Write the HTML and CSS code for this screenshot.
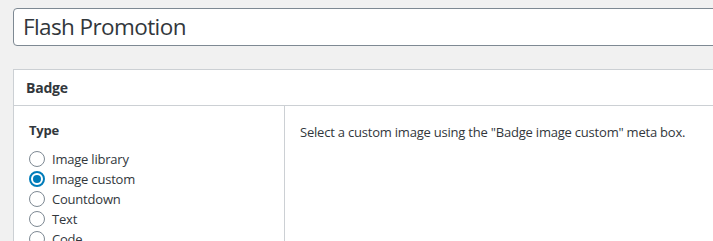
FILE: index.html
```html
<!DOCTYPE html>
<html>
<head>
<meta charset="utf-8">
<link rel="stylesheet" href="styles.css">
</head>
<body>
<div class="wrap">
  <div class="title-field">Flash Promotion</div>
  <div class="postbox">
    <h2 class="postbox-header">Badge</h2>
    <div class="postbox-body">
      <div class="col-left">
        <div class="field-label">Type</div>
        <ul class="radio-list">
          <li class="radio-item"><span class="radio"></span><span class="radio-label">Image library</span></li>
          <li class="radio-item"><span class="radio checked"></span><span class="radio-label">Image custom</span></li>
          <li class="radio-item"><span class="radio"></span><span class="radio-label">Countdown</span></li>
          <li class="radio-item"><span class="radio"></span><span class="radio-label">Text</span></li>
          <li class="radio-item"><span class="radio"></span><span class="radio-label">Code</span></li>
        </ul>
      </div>
      <div class="col-right">
        <p class="note">Select a custom image using the "Badge image custom" meta box.</p>
      </div>
    </div>
  </div>
</div>
</body>
</html>
```
FILE: styles.css
```css
html, body {
  margin: 0;
  padding: 0;
}
body {
  background: #f1f1f1;
  color: #32373c;
  font-family: "Open Sans", "Noto Sans", sans-serif;
  font-size: 13px;
  line-height: 1.4;
  letter-spacing: -0.21px;
  overflow: hidden;
  height: 241px;
}
.wrap {
  padding: 8px 0 0 13px;
  width: 760px;
}
.title-field {
  box-sizing: border-box;
  height: 38px;
  border: 1px solid #7e8993;
  border-radius: 4px;
  background: #fff;
  padding: 0 9px;
  font-size: 22.5px;
  letter-spacing: -0.6px;
  line-height: 35px;
  color: #32373c;
}
.postbox {
  margin-top: 23px;
  background: #fff;
  border: 1px solid #ccd0d4;
}
.postbox-header {
  margin: 0;
  padding: 8px 12px;
  font-size: 14px;
  line-height: 19px;
  font-weight: 700;
  border-bottom: 1px solid #ccd0d4;
}
.postbox-body {
  display: flex;
  min-height: 200px;
}
.col-left {
  border-right: 1px solid #ccd0d4;
  padding: 15px 0 0 15px;
  box-sizing: border-box;
  flex: none;
  width: 271px;
}
.field-label {
  font-weight: 700;
  font-size: 13px;
  line-height: 19px;
}
.radio-list {
  list-style: none;
  margin: 9px 0 0;
  padding: 0;
}
.radio-item {
  display: flex;
  align-items: center;
  height: 20px;
}
.radio {
  box-sizing: border-box;
  width: 16px;
  height: 16px;
  border: 1px solid #7e8993;
  border-radius: 50%;
  background: #fff;
  margin-right: 7px;
  flex: none;
  display: flex;
  align-items: center;
  justify-content: center;
}
.radio.checked {
  border: 2px solid #007cba;
}
.radio.checked::before {
  content: "";
  width: 8px;
  height: 8px;
  border-radius: 50%;
  background: #007cba;
}
.radio-label {
  line-height: 20px;
}
.col-right {
  flex: 1;
  padding: 17px 15px 0;
}
.note {
  margin: 0;
  line-height: 19px;
}
```
